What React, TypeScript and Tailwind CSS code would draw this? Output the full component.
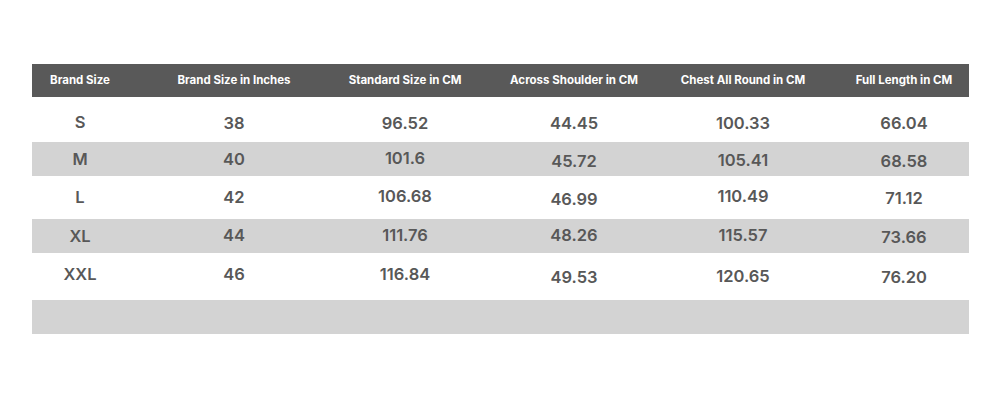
const cols = "grid grid-cols-[96px_212px_130px_208px_130px_1fr]"

const headers = [
  "Brand Size",
  "Brand Size in Inches",
  "Standard Size in CM",
  "Across Shoulder in CM",
  "Chest All Round in CM",
  "Full Length in CM",
]

// small vertical nudges, the source chart isn't perfectly aligned
const up2 = "-translate-y-[2px]"
const up1 = "-translate-y-[1px]"
const dn1 = "translate-y-[1px]"
const dn2 = "translate-y-[2px]"

const rows = [
  { h: "h-[45px]", bg: "bg-white", pad: "pt-[7px]", cells: ["S", "38", "96.52", "44.45", "100.33", "66.04"], dy: [up1, "", "", "", "", ""] },
  { h: "h-[34px]", bg: "bg-[#d3d3d3]", pad: "", cells: ["M", "40", "101.6", "45.72", "105.41", "68.58"], dy: ["", "", up1, dn2, dn1, dn2] },
  { h: "h-[43px]", bg: "bg-white", pad: "", cells: ["L", "42", "106.68", "46.99", "110.49", "71.12"], dy: ["", "", up1, dn2, up1, dn1] },
  { h: "h-[34px]", bg: "bg-[#d3d3d3]", pad: "", cells: ["XL", "44", "111.76", "48.26", "115.57", "73.66"], dy: ["", up1, up1, up1, up1, dn1] },
  { h: "h-[47px]", bg: "bg-white", pad: "", cells: ["XXL", "46", "116.84", "49.53", "120.65", "76.20"], dy: [up2, up2, up2, dn1, "", dn1] },
]

export default function App() {
  return (
    <div className="w-[1000px] h-[400px] bg-white pt-[64px] px-[32px] font-['Inter',sans-serif]">
      <div className="w-[937px]">
        {/* header */}
        <div className={`${cols} h-[33px] items-center bg-[#595959] text-white text-[11.5px] font-bold`}>
          {headers.map((h, i) => (
            <div key={h} className={i === 5 ? "text-center pl-[31px]" : "text-center"}>
              {h}
            </div>
          ))}
        </div>

        {rows.map((r) => (
          <div key={r.cells[0]} className={`${cols} ${r.h} ${r.bg} ${r.pad} items-center text-[#585858] text-[16.5px] font-semibold`}>
            {r.cells.map((c, i) => (
              <div key={i} className={`${i === 5 ? "pl-[31px]" : ""} ${r.dy[i]} text-center`}>
                {c}
              </div>
            ))}
          </div>
        ))}

        {/* empty footer band */}
        <div className="h-[34px] bg-[#d3d3d3]" />
      </div>
    </div>
  )
}
